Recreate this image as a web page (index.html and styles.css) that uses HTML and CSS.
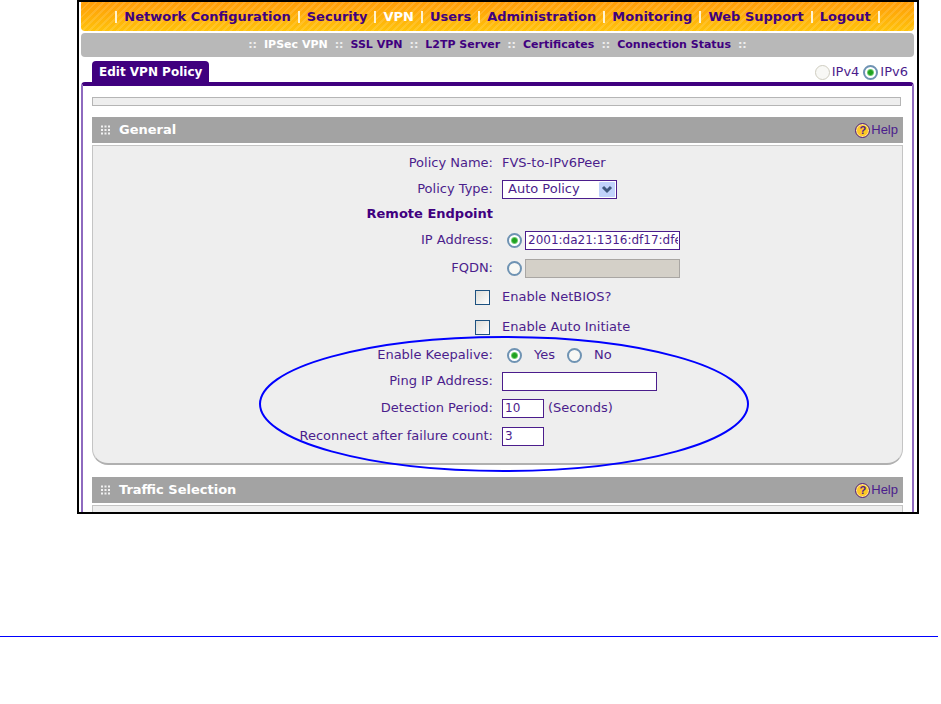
FILE: index.html
```html
<!DOCTYPE html>
<html lang="en">
<head>
  <meta charset="UTF-8">
  <title>Edit VPN Policy</title>
  <link rel="stylesheet" href="styles.css">
</head>
<body>
  <div class="frame">
    <nav class="main-nav">
      <a href="#">Network Configuration</a>
      <a href="#">Security</a>
      <a href="#" class="active">VPN</a>
      <a href="#">Users</a>
      <a href="#">Administration</a>
      <a href="#">Monitoring</a>
      <a href="#">Web Support</a>
      <a href="#">Logout</a>
    </nav>
    <nav class="sub-nav">
      <span class="sep">::</span>
      <a href="#" class="active">IPSec VPN</a>
      <span class="sep">::</span>
      <a href="#">SSL VPN</a>
      <span class="sep">::</span>
      <a href="#">L2TP Server</a>
      <span class="sep">::</span>
      <a href="#">Certificates</a>
      <span class="sep">::</span>
      <a href="#">Connection Status</a>
      <span class="sep">::</span>
    </nav>

    <div class="tab-row">
      <h1 class="tab">Edit VPN Policy</h1>
      <div class="ip-version">
        <input type="radio" name="ipver" id="ipv4" disabled>
        <label for="ipv4">IPv4</label>
        <input type="radio" name="ipver" id="ipv6" checked>
        <label for="ipv6">IPv6</label>
      </div>
    </div>

    <main class="panel">
      <div class="message-bar"></div>

      <section class="section">
        <div class="section-header">
          <svg class="grip" width="10" height="10" viewBox="0 0 10 10"><path d="M0 1.5h9M0 5h9M0 8.5h9" stroke="#f2f2f2" stroke-width="2" stroke-dasharray="2 1.5"/></svg>
          <h2>General</h2>
          <a href="#" class="help"><span class="help-icon">?</span>Help</a>
        </div>
        <form class="section-body">
          <div class="row">
            <span class="name">Policy Name:</span>
            <span>FVS-to-IPv6Peer</span>
          </div>
          <div class="row">
            <label class="name" for="policy-type">Policy Type:</label>
            <div class="select">
              <select id="policy-type">
                <option>Auto Policy</option>
                <option>Manual Policy</option>
              </select>
              <svg class="arrow" width="16" height="15" viewBox="0 0 16 15"><rect width="16" height="15" rx="1" fill="#c1d3fb"/><path d="M4 5l4 4 4-4" fill="none" stroke="#41597f" stroke-width="3"/></svg>
            </div>
          </div>
          <div class="row heading">
            <strong class="name">Remote Endpoint</strong>
          </div>
          <div class="row tall">
            <label class="name" for="use-ip">IP Address:</label>
            <div class="field endpoint">
              <input type="radio" name="endpoint" id="use-ip" checked>
              <input type="text" class="text" aria-label="Remote IP address" value="2001:da21:1316:df17:dfee::1">
            </div>
          </div>
          <div class="row tall">
            <label class="name" for="use-fqdn">FQDN:</label>
            <div class="field endpoint">
              <input type="radio" name="endpoint" id="use-fqdn">
              <input type="text" class="text" aria-label="Remote FQDN" disabled>
            </div>
          </div>
          <div class="row check">
            <div class="name"><input type="checkbox" id="netbios"></div>
            <label for="netbios">Enable NetBIOS?</label>
          </div>
          <div class="row check">
            <div class="name"><input type="checkbox" id="auto-init"></div>
            <label for="auto-init">Enable Auto Initiate</label>
          </div>
          <div class="row">
            <span class="name">Enable Keepalive:</span>
            <div class="field choices">
              <input type="radio" name="keepalive" id="ka-yes" checked>
              <label for="ka-yes">Yes</label>
              <input type="radio" name="keepalive" id="ka-no">
              <label for="ka-no">No</label>
            </div>
          </div>
          <div class="row">
            <label class="name" for="ping-ip">Ping IP Address:</label>
            <input type="text" class="text" id="ping-ip">
          </div>
          <div class="row tall">
            <label class="name" for="period">Detection Period:</label>
            <div class="field">
              <input type="text" class="text short" id="period" value="10">
              <span class="unit">(Seconds)</span>
            </div>
          </div>
          <div class="row tall">
            <label class="name" for="failures">Reconnect after failure count:</label>
            <input type="text" class="text short" id="failures" value="3">
          </div>
        </form>
        <!-- callout round the keepalive settings -->
        <svg class="callout" width="492" height="138" viewBox="0 0 492 138"><ellipse cx="246" cy="69" rx="244" ry="67" fill="none" stroke="#00f" stroke-width="2"/></svg>
      </section>

      <section class="section">
        <div class="section-header">
          <svg class="grip" width="10" height="10" viewBox="0 0 10 10"><path d="M0 1.5h9M0 5h9M0 8.5h9" stroke="#f2f2f2" stroke-width="2" stroke-dasharray="2 1.5"/></svg>
          <h2>Traffic Selection</h2>
          <a href="#" class="help"><span class="help-icon">?</span>Help</a>
        </div>
        <div class="section-body cut"></div>
      </section>
    </main>
  </div>
  <hr class="page-rule">
</body>
</html>
```

FILE: styles.css
```css
* {
  box-sizing: border-box;
}
body {
  margin: 0;
  background: #fff;
  color: #4b1d8c;
  font-family: "DejaVu Sans", Verdana, sans-serif;
  font-size: 13px;
  line-height: 16px;
}
a {
  color: inherit;
  text-decoration: none;
}
h1, h2 {
  margin: 0;
  font-size: 13px;
}
.frame {
  margin: 0 22px 0 77px;
  border: 2px solid #000;
  padding: 0 3px 0 2px;
  overflow: hidden;
}

/* Top navigation */
.main-nav {
  display: flex;
  justify-content: center;
  height: 29px;
  align-items: center;
  border-radius: 0 0 4px 4px;
  background:
    repeating-linear-gradient(135deg, rgba(255, 255, 255, 0.12) 0 2px, transparent 2px 5px),
    linear-gradient(#ff9d08, #ffc20a);
  color: #40007f;
  font-weight: bold;
  white-space: nowrap;
}
.main-nav a {
  display: flex;
  align-items: center;
}
.main-nav a::after,
.main-nav a:first-child::before {
  content: "";
  width: 2px;
  height: 12px;
  margin: 0 7px;
  background: #fff3d0;
}
.main-nav .active,
.sub-nav .active {
  color: #fff;
}
.sub-nav {
  display: flex;
  justify-content: center;
  align-items: center;
  gap: 7px;
  height: 24px;
  margin-top: 2px;
  border-radius: 4px;
  background: #b8b8b8;
  color: #40007f;
  font-size: 11px;
  font-weight: bold;
  white-space: nowrap;
}
.sep {
  color: #eee;
}

/* Page tab */
.tab-row {
  display: flex;
  justify-content: space-between;
  align-items: flex-end;
  margin-top: 4px;
  padding: 0 6px 0 11px;
}
.tab {
  padding: 3px 7px 2px;
  border-radius: 4px 4px 0 0;
  background: #40007f;
  color: #fff;
  font-size: 12px;
}
.ip-version {
  display: flex;
  align-items: center;
  gap: 2px;
  padding-bottom: 2px;
}
.ip-version label + input {
  margin-left: 2px;
}
.panel {
  height: 430px;
  padding: 11px 9px 0;
  border: 2px solid #8e6abf;
  border-top: 4px solid #40007f;
  border-bottom: 0;
  border-radius: 4px 4px 0 0;
}
.message-bar {
  height: 9px;
  margin-right: 2px;
  border: 1px solid #b5b5b5;
  background: #eee;
}

/* Sections */
.section {
  position: relative;
  margin-top: 11px;
}
.section + .section {
  margin-top: 12px;
}
.section-header {
  display: flex;
  align-items: center;
  height: 26px;
  padding: 0 5px 0 9px;
  background: #a3a3a3;
  color: #fff;
}
.section-header h2 {
  margin-left: 8px;
}
.help {
  display: flex;
  align-items: center;
  gap: 1px;
  margin-left: auto;
  color: #4b1d8c;
  font-family: "Liberation Sans", Arial, sans-serif;
}
.help-icon {
  width: 15px;
  height: 15px;
  border: 1px solid #4b1d8c;
  border-radius: 50%;
  background: #ffc726;
  box-shadow: inset 0 0 0 1px #ffe79a;
  font-size: 11px;
  font-weight: bold;
  line-height: 13px;
  text-align: center;
}
.section-body {
  margin-top: 2px;
  padding: 4px 0 13px;
  border: 1px solid #c4c4c4;
  border-bottom: 2px solid #b0b0b0;
  border-radius: 0 0 16px 16px;
  background: #eee;
}
.section-body.cut {
  height: 30px;
}
.row {
  display: grid;
  grid-template-columns: 1fr 1fr;
  gap: 9px;
  align-items: center;
  height: 26px;
}
.row.heading {
  height: 24px;
}
.row.tall {
  height: 28px;
}
.row.check {
  height: 30px;
}
.name {
  text-align: right;
}
strong.name {
  color: #40007f;
}
.check .name {
  display: flex;
  justify-content: flex-end;
  padding-right: 3px;
}
.field {
  display: flex;
  align-items: center;
}
.endpoint {
  gap: 3px;
  padding-left: 5px;
}
.choices {
  gap: 12px;
  padding-left: 5px;
}
.unit {
  margin-left: 4px;
}

/* Controls */
input[type="radio"],
input[type="checkbox"] {
  appearance: none;
  flex: none;
  width: 15px;
  height: 15px;
  margin: 0;
  border: 2px solid #6f93b3;
  border-radius: 50%;
  background: #f8f8f5;
}
input[type="radio"]:checked {
  background: radial-gradient(circle, #21a121 0 2px, #6ccc6c 3px, #fff 4px);
}
input[type="radio"]:disabled {
  border: 1px solid #cfcdc0;
}
input[type="checkbox"] {
  border: 1px solid #1c5180;
  border-radius: 0;
  background: linear-gradient(135deg, #dcdcd7, #fff);
}
.text {
  width: 155px;
  height: 19px;
  padding: 0 1px 0 2px;
  border: 1px solid #4b1d8c;
  outline: 0;
  background: #fff;
  color: #4b1d8c;
  font: inherit;
  font-size: 12px;
}
.text:disabled {
  border-color: #a9a6a3;
  background: #d4d0c8;
}
.short {
  width: 42px;
}
.select {
  position: relative;
  width: 115px;
}
.select select {
  display: block;
  appearance: none;
  width: 100%;
  height: 19px;
  padding: 0 5px;
  border: 1px solid #4b1d8c;
  border-radius: 0;
  background: #fff;
  color: #4b1d8c;
  font: inherit;
}
.arrow {
  position: absolute;
  top: 2px;
  right: 2px;
  pointer-events: none;
}
.callout {
  position: absolute;
  top: 218px;
  left: calc(50% - 240px);
  pointer-events: none;
}
.page-rule {
  margin: 122px 3px 0 0;
  border: 0;
  border-top: 1px solid #00f;
}
```
